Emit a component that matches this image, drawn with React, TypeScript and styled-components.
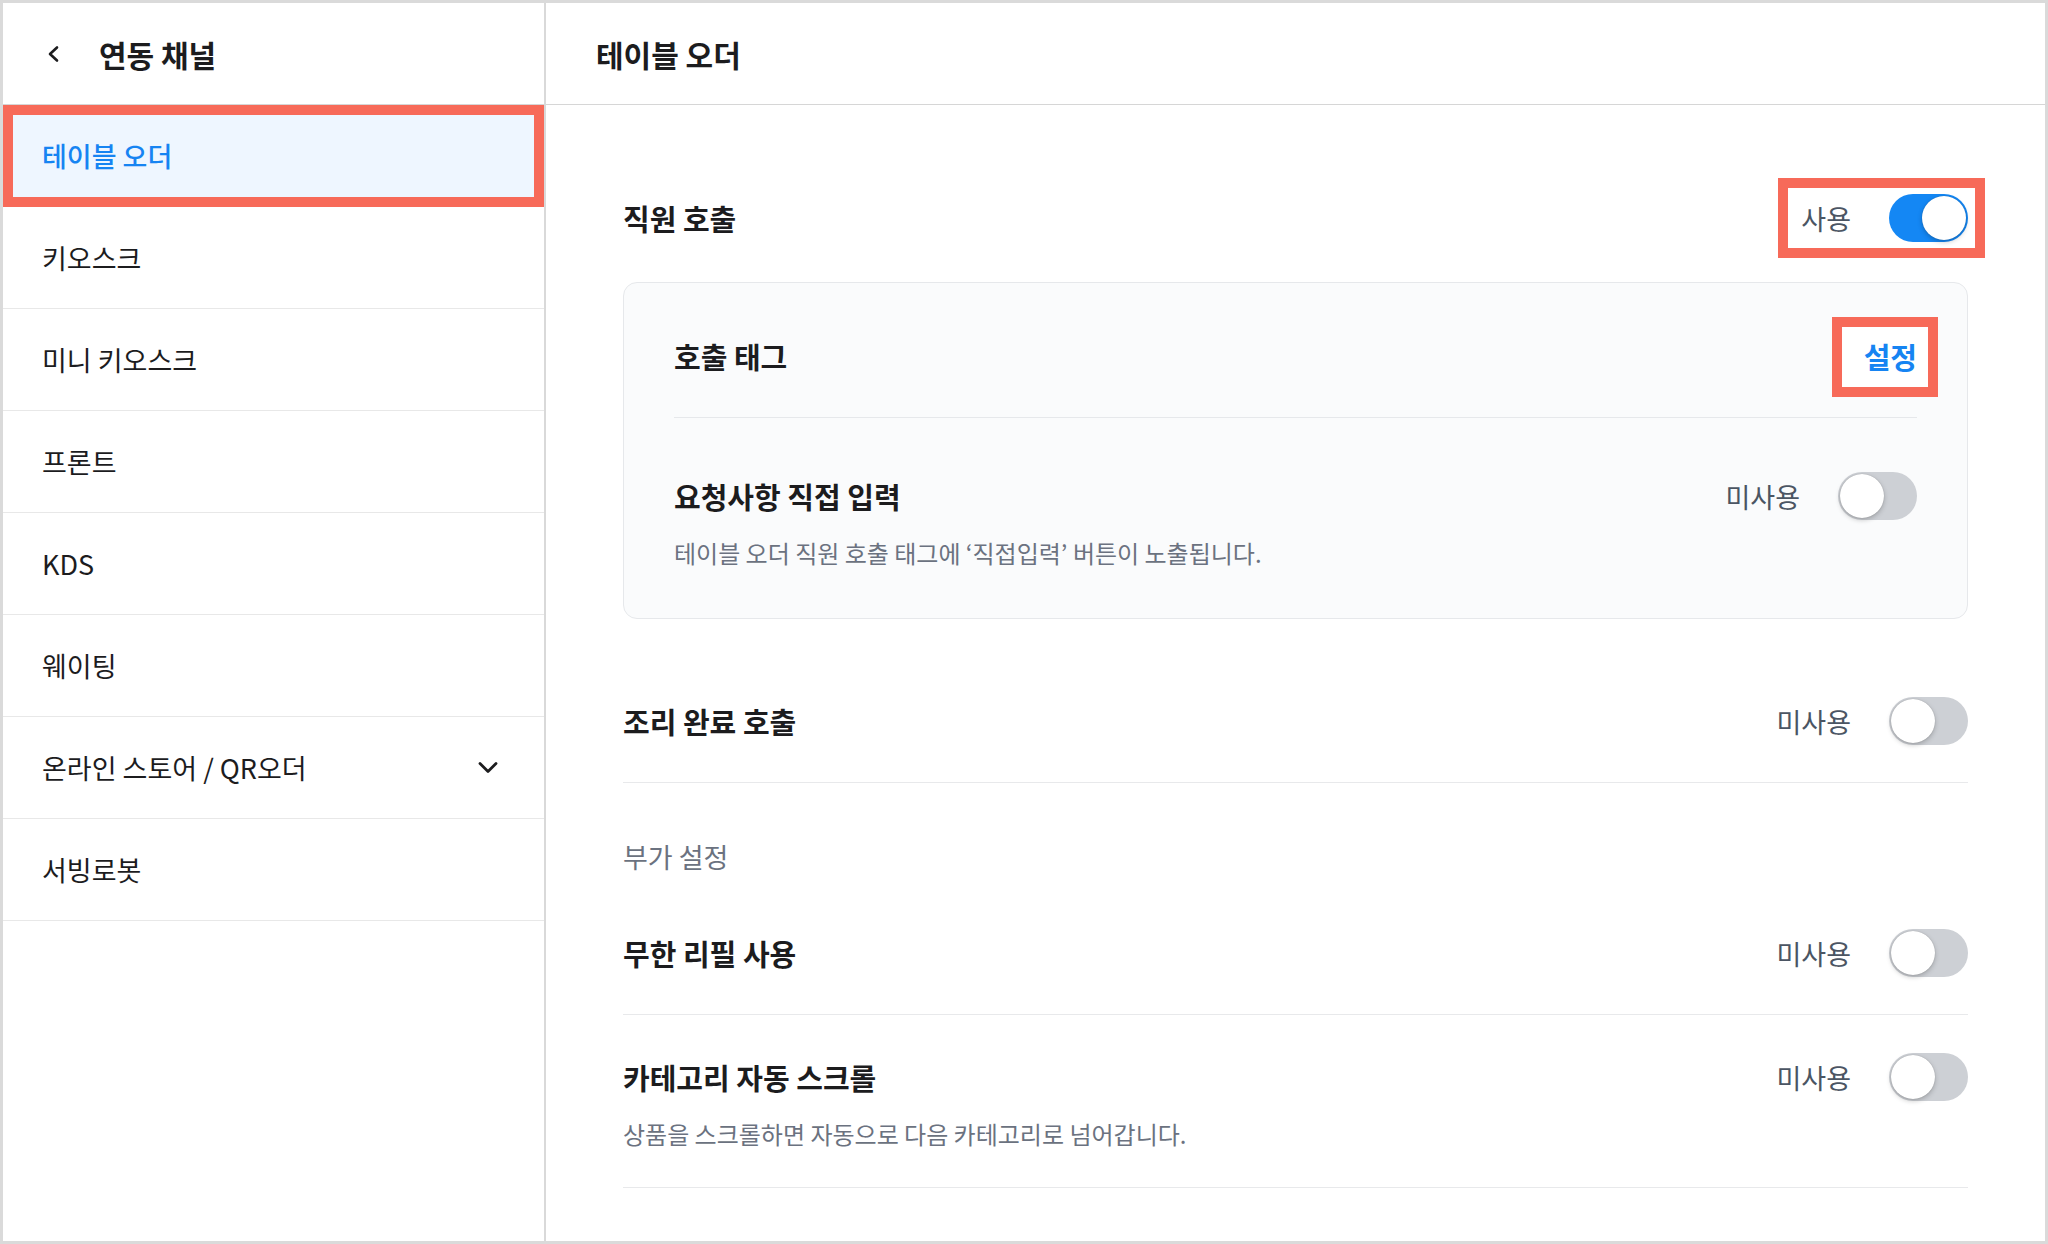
import React from 'react'
import styled, { createGlobalStyle } from 'styled-components'

const channels = [
  { name: '테이블 오더', active: true },
  { name: '키오스크' },
  { name: '미니 키오스크' },
  { name: '프론트' },
  { name: 'KDS' },
  { name: '웨이팅' },
  { name: '온라인 스토어 / QR오더', expandable: true },
  { name: '서빙로봇' },
]

const GlobalStyle = createGlobalStyle`
  * { box-sizing: border-box; }
  html, body { margin: 0; padding: 0; background: #fff; }
  body {
    font-family: 'Noto Sans CJK KR', 'Noto Sans', sans-serif;
    color: #1c1c1e;
  }
`

const Frame = styled.div`
  width: 2048px;
  height: 1244px;
  border: 3px solid #dadada;
  display: flex;
  background: #fff;
  overflow: hidden;
`

const Sidebar = styled.aside`
  width: 543px;
  flex-shrink: 0;
  border-right: 2px solid #d9d9d9;
  display: flex;
  flex-direction: column;
`

const SideHeader = styled.div`
  height: 102px;
  border-bottom: 1px solid #d6d6d6;
  display: flex;
  align-items: center;
  gap: 38px;
  padding-left: 42px;
  font-size: 30px;
  font-weight: 700;
  svg { display: block; }
`

const SideItem = styled.div<{ $active?: boolean }>`
  height: 102px;
  border-bottom: 1px solid #e8e8e8;
  display: flex;
  align-items: center;
  justify-content: space-between;
  padding: 0 45px 0 39px;
  font-size: 27px;
  color: ${p => (p.$active ? '#1684f2' : '#1c1c1e')};
  font-weight: ${p => (p.$active ? 500 : 400)};
  background: ${p => (p.$active ? '#eef6ff' : '#fff')};
  outline: ${p => (p.$active ? '10px solid #f76a59' : 'none')};
  outline-offset: -10px;
  svg { display: block; }
`

const Main = styled.main`
  flex: 1;
  display: flex;
  flex-direction: column;
`

const MainHeader = styled.div`
  height: 102px;
  border-bottom: 1px solid #d6d6d6;
  display: flex;
  align-items: center;
  padding-left: 50px;
  font-size: 30px;
  font-weight: 700;
`

const Content = styled.div`
  padding: 51px 77px 0 77px;
`

const Group = styled.section`
  padding: 38px 0 40px;
`

const Row = styled.div`
  padding: 38px 0 37px;
  border-bottom: 1px solid #e8e9eb;
`

const RowHead = styled.div`
  display: flex;
  align-items: center;
  justify-content: space-between;
  min-height: 48px;
`

const Title = styled.div`
  font-size: 29px;
  font-weight: 700;
  line-height: 48px;
`

const Desc = styled.div`
  margin-top: 16px;
  font-size: 24px;
  line-height: 33px;
  color: #6b7280;
`

const Control = styled.div`
  display: flex;
  align-items: center;
  gap: 38px;
  font-size: 27px;
  color: #4b5563;
`

const Card = styled.div`
  margin-top: 40px;
  border: 1px solid #e6e8eb;
  border-radius: 14px;
  background: #fafbfc;
  padding: 12px 50px;
`

const CardRow = styled.div`
  padding: 37px 0;
  & + & {
    border-top: 1px solid #e6e8eb;
    padding-top: 54px;
  }
`

const SectionLabel = styled.div`
  padding: 56px 0 16px;
  font-size: 27px;
  line-height: 36px;
  color: #6b7280;
`

const LinkButton = styled.button`
  border: none;
  background: none;
  padding: 0;
  font-family: inherit;
  font-size: 29px;
  font-weight: 700;
  line-height: 48px;
  color: #1684f2;
`

// red annotation box drawn over a control; negative margin keeps the flow unchanged
const Marker = styled.div<{ $pad: [number, number, number, number] }>`
  display: flex;
  border: 10px solid #f76a59;
  background: #fff;
  padding: ${p => p.$pad.map(v => `${v}px`).join(' ')};
  margin: ${p => p.$pad.map(v => `${-(v + 10)}px`).join(' ')};
`

const Track = styled.span<{ $on?: boolean }>`
  width: 79px;
  height: 48px;
  border-radius: 24px;
  padding: 2px;
  display: flex;
  align-items: center;
  justify-content: ${p => (p.$on ? 'flex-end' : 'flex-start')};
  background: ${p => (p.$on ? '#1487f4' : '#cdd0d5')};
  flex-shrink: 0;
`

const Knob = styled.span`
  width: 44px;
  height: 44px;
  border-radius: 50%;
  background: #fff;
  box-shadow: 0 2px 5px rgba(0, 0, 0, 0.22), 0 0 1px rgba(0, 0, 0, 0.25);
`

const Toggle = ({ on }: { on?: boolean }) => (
  <Track $on={on}>
    <Knob />
  </Track>
)

const Switch = ({ on }: { on?: boolean }) => (
  <Control>
    <span>{on ? '사용' : '미사용'}</span>
    <Toggle on={on} />
  </Control>
)

const BackIcon = () => (
  <svg width="16" height="20" viewBox="0 0 16 20" fill="none">
    <path d="M12 3.5L5 10l7 6.5" stroke="#1c1c1e" strokeWidth="2.6" strokeLinecap="round" strokeLinejoin="round" />
  </svg>
)

const ChevronDown = () => (
  <svg width="22" height="14" viewBox="0 0 22 14" fill="none">
    <path d="M3 2.5l8 8 8-8" stroke="#1c1c1e" strokeWidth="2.8" strokeLinecap="round" strokeLinejoin="round" />
  </svg>
)

export default function App() {
  return (
    <>
      <GlobalStyle />
      <Frame>
        <Sidebar>
          <SideHeader>
            <BackIcon />
            <span>연동 채널</span>
          </SideHeader>
          {channels.map(c => (
            <SideItem key={c.name} $active={c.active}>
              <span>{c.name}</span>
              {c.expandable && <ChevronDown />}
            </SideItem>
          ))}
        </Sidebar>
        <Main>
          <MainHeader>테이블 오더</MainHeader>
          <Content>
            <Group>
              <RowHead>
                <Title>직원 호출</Title>
                <Marker $pad={[6, 7, 6, 13]}>
                  <Switch on />
                </Marker>
              </RowHead>
              <Card>
                <CardRow>
                  <RowHead>
                    <Title>호출 태그</Title>
                    <Marker $pad={[5, 11, 7, 22]}>
                      <LinkButton>설정</LinkButton>
                    </Marker>
                  </RowHead>
                </CardRow>
                <CardRow>
                  <RowHead>
                    <Title>요청사항 직접 입력</Title>
                    <Switch />
                  </RowHead>
                  <Desc>테이블 오더 직원 호출 태그에 ‘직접입력’ 버튼이 노출됩니다.</Desc>
                </CardRow>
              </Card>
            </Group>
            <Row>
              <RowHead>
                <Title>조리 완료 호출</Title>
                <Switch />
              </RowHead>
            </Row>
            <SectionLabel>부가 설정</SectionLabel>
            <Row>
              <RowHead>
                <Title>무한 리필 사용</Title>
                <Switch />
              </RowHead>
            </Row>
            <Row>
              <RowHead>
                <Title>카테고리 자동 스크롤</Title>
                <Switch />
              </RowHead>
              <Desc>상품을 스크롤하면 자동으로 다음 카테고리로 넘어갑니다.</Desc>
            </Row>
          </Content>
        </Main>
      </Frame>
    </>
  )
}
